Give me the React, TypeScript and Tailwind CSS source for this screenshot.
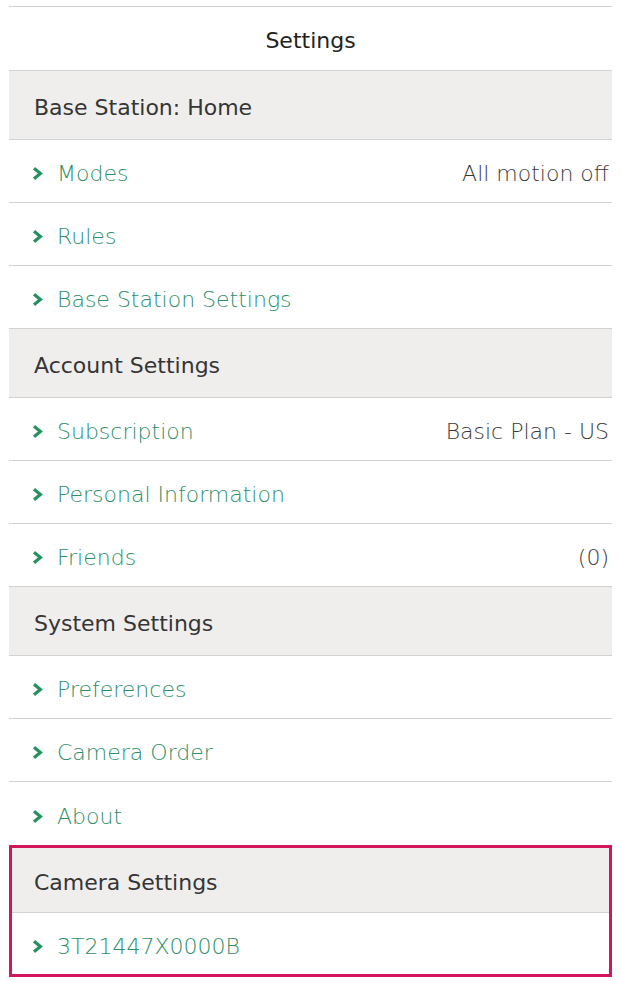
import React from "react"

type Row = { label: string; value?: string }
type Section = { title: string; rows: Row[]; highlight?: boolean }

const SECTIONS: Section[] = [
  {
    title: "Base Station: Home",
    rows: [{ label: "Modes", value: "All motion off" }, { label: "Rules" }, { label: "Base Station Settings" }],
  },
  {
    title: "Account Settings",
    rows: [{ label: "Subscription", value: "Basic Plan - US" }, { label: "Personal Information" }, { label: "Friends", value: "(0)" }],
  },
  {
    title: "System Settings",
    rows: [{ label: "Preferences" }, { label: "Camera Order" }, { label: "About" }],
  },
  {
    title: "Camera Settings",
    rows: [{ label: "3T21447X0000B" }],
    highlight: true,
  },
]

function Chevron() {
  return (
    <svg width="11" height="13" viewBox="0 0 11 13" className="shrink-0">
      <polyline points="2,1.3 8.4,6.5 2,11.7" fill="none" stroke="#23925f" strokeWidth="3.2" strokeLinejoin="miter" />
    </svg>
  )
}

function ItemRow({ row, last, compact }: { row: Row; last: boolean; compact?: boolean }) {
  return (
    <div
      className={`flex items-center pr-[3px] pt-[5px] ${compact ? "h-[61px] pl-[20px]" : "h-[63px] pl-[23px]"} ${
        last ? "" : "border-b border-[#d2d2d2]"
      }`}
    >
      <Chevron />
      <span className="ml-[14px] text-[22px] font-light text-[#2c8f6a]">{row.label}</span>
      {row.value && <span className="ml-auto text-[22px] font-light text-[#3a3a3a]">{row.value}</span>}
    </div>
  )
}

function Header({ title, compact }: { title: string; compact?: boolean }) {
  return (
    <div
      className={`flex items-center border-b border-[#d2d2d2] bg-[#efeeec] pt-[5px] text-[22px] text-[#353535] ${
        compact ? "h-[65px] pl-[22px]" : "h-[69px] pl-[25px]"
      }`}
    >
      {title}
    </div>
  )
}

function SectionBlock({ section, lastSection }: { section: Section; lastSection: boolean }) {
  if (section.highlight) {
    return (
      <div className="border-[3px] border-[#d3155c]">
        <Header title={section.title} compact />
        {section.rows.map((r, i) => (
          <ItemRow key={r.label} row={r} last={i === section.rows.length - 1} compact />
        ))}
      </div>
    )
  }
  return (
    <div>
      <Header title={section.title} />
      {section.rows.map((r, i) => (
        <ItemRow key={r.label} row={r} last={i === section.rows.length - 1 && lastSection} />
      ))}
    </div>
  )
}

export default function App() {
  return (
    <div className="min-h-[981px] bg-white px-[9px] pt-[6px]" style={{ fontFamily: '"DejaVu Sans", "Open Sans", sans-serif' }}>
      <div className="border-t border-[#d2d2d2]">
        <div className="flex h-[64px] items-center justify-center border-b border-[#d2d2d2] pt-[4px] text-[22px] text-[#222222]">
          Settings
        </div>
        {SECTIONS.map((s, i) => (
          <SectionBlock key={s.title} section={s} lastSection={i === SECTIONS.length - 2} />
        ))}
      </div>
    </div>
  )
}
